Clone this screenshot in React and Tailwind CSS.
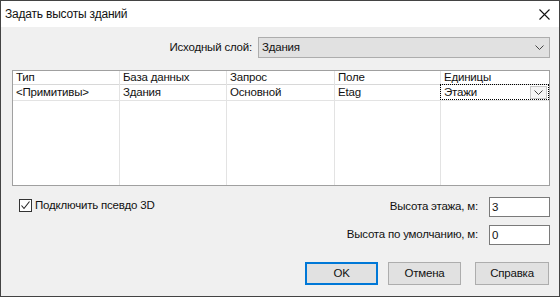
import React from "react";

const FONT = "font-['Liberation_Sans','Arial',sans-serif]";

function Chevron({ className = "" }) {
  return (
    <svg width="9" height="5" viewBox="0 0 9 5" className={className}>
      <path d="M0.5 0.5 L4.5 4.5 L8.5 0.5" fill="none" stroke="#444" strokeWidth="1" />
    </svg>
  );
}

function Column({ header, value, width, last, focus }) {
  return (
    <div className={`flex flex-col ${width} ${last ? "" : "border-r border-[#e3e3e3]"}`}>
      <div className="h-[14px] border-b border-[#d8d8d8] pl-[3px] leading-[13px] whitespace-nowrap">{header}</div>
      <div className="relative h-[16px] border-b border-[#e3e3e3] pl-[3px] leading-[15px] whitespace-nowrap">
        {value}
        {focus && (
          <>
            <div className="absolute left-[-1px] top-[-1px] right-0 bottom-0 border border-dotted border-black pointer-events-none" />
            <div className="absolute right-[2px] top-[1px] w-[17px] h-[13px] border border-[#c8c8c8] bg-[#f4f4f4] flex items-center justify-center">
              <Chevron />
            </div>
          </>
        )}
      </div>
      <div className="flex-1" />
    </div>
  );
}

export default function App() {
  return (
    <div className={`w-[560px] h-[297px] border border-[#434343] bg-[#f0f0f0] flex flex-col text-[11.5px] tracking-[-0.2px] text-[#111] overflow-hidden ${FONT}`}>
      <div className="h-[26px] bg-white flex items-center justify-between pl-[4px] pr-[9px]">
        <span className="leading-none text-[12px]">Задать высоты зданий</span>
        <svg width="11" height="11" viewBox="0 0 11 11">
          <path d="M0.5 0.5 L10.5 10.5 M10.5 0.5 L0.5 10.5" stroke="#111" strokeWidth="1.1" />
        </svg>
      </div>
      <div className="flex-1 flex flex-col pl-[11px] pr-[9px]">
        <div className="mt-[10px] flex justify-end items-center gap-[6px]">
          <span>Исходный слой:</span>
          <div className="w-[292px] h-[21px] border border-[#adadad] bg-[#e1e1e1] flex items-center justify-between pl-[3px] pr-[5px]">
            <span>Здания</span>
            <Chevron />
          </div>
        </div>
        <div className="mt-[12px] w-[538px] h-[116px] border border-[#a0a0a0] bg-white flex">
          <Column header="Тип" value="<Примитивы>" width="w-[107px]" />
          <Column header="База данных" value="Здания" width="w-[107px]" />
          <Column header="Запрос" value="Основной" width="w-[108px]" />
          <Column header="Поле" value="Etag" width="w-[106px]" />
          <Column header="Единицы" value="Этажи" width="flex-1" last focus />
        </div>
        <div className="mt-[11px] flex justify-between">
          <label className="mt-[2px] ml-[7px] flex items-start gap-[3px] h-[14px]">
            <span className="w-[13px] h-[13px] border border-[#333] bg-white flex items-center justify-center">
              <svg width="11" height="11" viewBox="0 0 11 11">
                <path d="M1.5 5.5 L4 8.5 L9.5 1.5" fill="none" stroke="#222" strokeWidth="1.1" />
              </svg>
            </span>
            <span className="leading-[13px]">Подключить псевдо 3D</span>
          </label>
          <div className="flex flex-col gap-[8px]">
            <div className="flex items-center justify-end gap-[11px]">
              <span>Высота этажа, м:</span>
              <div className="w-[61px] h-[20px] border border-[#7a7a7a] bg-white pl-[2px] leading-[18px]">3</div>
            </div>
            <div className="flex items-center justify-end gap-[11px]">
              <span>Высота по умолчанию, м:</span>
              <div className="w-[61px] h-[20px] border border-[#7a7a7a] bg-white pl-[2px] leading-[18px]">0</div>
            </div>
          </div>
        </div>
        <div className="mt-[17px] mr-[1px] flex justify-end">
          <button className="w-[73px] h-[23px] border-2 border-[#0078d7] bg-[#e1e1e1] leading-none">OK</button>
          <button className="ml-[10px] w-[73px] h-[23px] border border-[#adadad] bg-[#e1e1e1] leading-none">Отмена</button>
          <button className="ml-[14px] w-[74px] h-[23px] border border-[#adadad] bg-[#e1e1e1] leading-none">Справка</button>
        </div>
      </div>
    </div>
  );
}
